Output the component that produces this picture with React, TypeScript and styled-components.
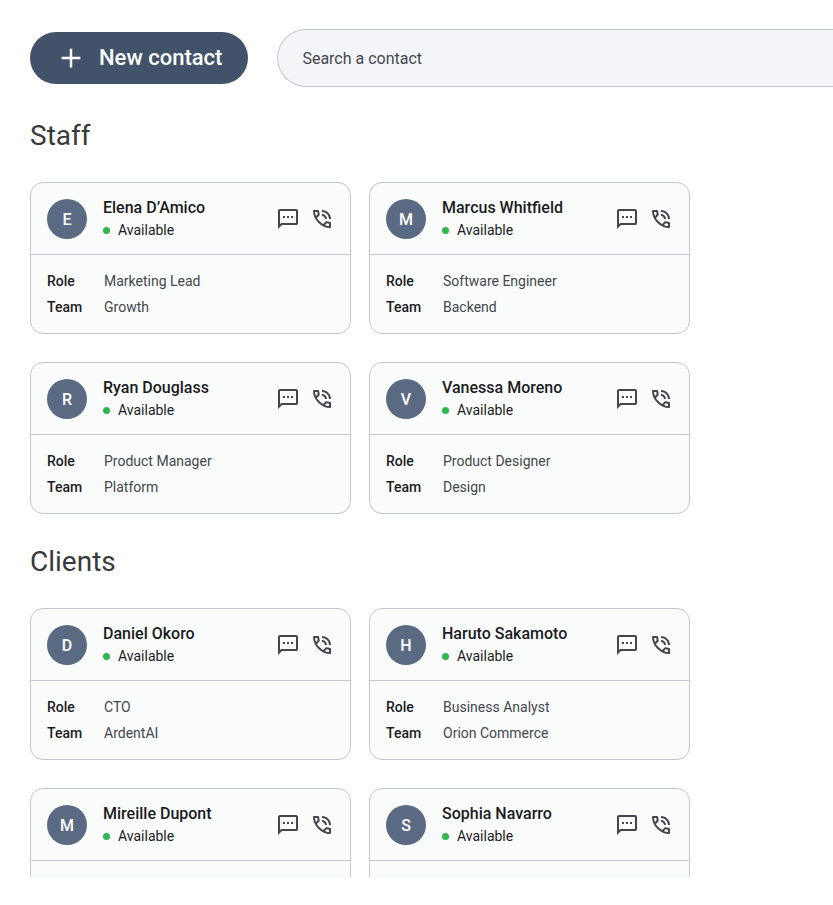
import React from 'react';
import styled, { createGlobalStyle } from 'styled-components';

const GlobalStyle = createGlobalStyle`
  *, *::before, *::after { box-sizing: border-box; }
  body {
    margin: 0;
    background: #ffffff;
    color: #1a1b1f;
    font-family: Roboto, 'Noto Sans', sans-serif;
  }
`;

const Page = styled.div`
  display: flex;
  flex-direction: column;
  gap: 1px;
  height: 100vh;
  padding: 29px 0 28px 30px;
`;

const Toolbar = styled.header`
  display: flex;
  flex: none;
  align-items: center;
  gap: 29px;
`;

const NewContactButton = styled.button`
  display: flex;
  flex: none;
  align-items: center;
  gap: 13px;
  height: 52px;
  padding: 0 26px;
  border: 0;
  border-radius: 26px;
  background: #43526b;
  color: #ffffff;
  font: 500 22px/28px Roboto, sans-serif;
  cursor: pointer;
`;

const SearchInput = styled.input`
  flex: 1;
  min-width: 0;
  height: 58px;
  padding: 0 24px;
  border: 1px solid #c3c6d1;
  border-right: 0;
  border-radius: 29px 0 0 29px;
  background: #f4f5f8;
  color: #1a1b1f;
  font: 400 16px/24px Roboto, sans-serif;

  &::placeholder {
    color: #44464e;
    opacity: 1;
  }
`;

const Contacts = styled.main`
  flex: 1;
  min-height: 0;
  overflow: hidden;
`;

const SectionTitle = styled.h2`
  margin: 0;
  padding: 30px 0 28px;
  color: #3a3a3c;
  font-size: 28px;
  font-weight: 400;
  line-height: 36px;
`;

const CardGrid = styled.div`
  display: grid;
  grid-template-columns: repeat(auto-fill, 321px);
  gap: 28px 18px;
`;

const Card = styled.article`
  overflow: hidden;
  border: 1px solid #c3c6d1;
  border-radius: 13px;
  background: #fafcfb;
`;

const CardHead = styled.div`
  display: flex;
  align-items: center;
  gap: 16px;
  padding: 14px 16px 13px;
  border-bottom: 1px solid #c3c6d1;
`;

const Avatar = styled.div`
  display: grid;
  flex: none;
  place-items: center;
  width: 40px;
  height: 40px;
  border-radius: 50%;
  background: #5b6a83;
  color: #ffffff;
  font-size: 16px;
  font-weight: 500;
`;

const Identity = styled.div`
  flex: 1;
  min-width: 0;
`;

const Name = styled.h3`
  margin: 0;
  font-size: 16px;
  font-weight: 500;
  line-height: 22px;
`;

const Status = styled.div`
  display: flex;
  align-items: center;
  gap: 8px;
  font-size: 14px;
  line-height: 22px;

  &::before {
    content: '';
    width: 7px;
    height: 7px;
    border-radius: 50%;
    background: #2fb64f;
  }
`;

const Actions = styled.div`
  display: flex;
  gap: 10px;
`;

const IconButton = styled.button`
  display: flex;
  padding: 0;
  border: 0;
  background: none;
  color: #44464e;
  cursor: pointer;
`;

const Details = styled.dl`
  display: grid;
  grid-template-columns: 57px 1fr;
  margin: 0;
  padding: 13px 16px;
  font-size: 14px;
  line-height: 26px;
`;

const Term = styled.dt`
  font-weight: 500;
`;

const Value = styled.dd`
  margin: 0;
  color: #44464e;
`;

const PlusIcon = () => (
  <svg width="30" height="30" viewBox="0 0 24 24" fill="currentColor" aria-hidden="true">
    <path d="M11 13H4.5v-2H11V4.5h2V11h6.5v2H13v6.5h-2z" />
  </svg>
);

const MessageIcon = () => (
  <svg width="24" height="24" viewBox="0 0 24 24" fill="currentColor" aria-hidden="true">
    <path d="M2 22V4q0-.825.588-1.412T4 2h16q.825 0 1.413.588T22 4v12q0 .825-.587 1.413T20 18H6zm3.150-6H20V4H4v13.125zM7 9h2v2H7zm4 0h2v2h-2zm4 0h2v2h-2z" />
  </svg>
);

const CallIcon = () => (
  <svg width="24" height="24" viewBox="0 0 24 24" fill="currentColor" aria-hidden="true">
    <path d="M19 12q0-2.925-2.038-4.962T12 5V3q1.875 0 3.513.713t2.85 1.925 1.925 2.85T21 12zm-4 0q0-1.250-.875-2.125T12 9V7q2.075 0 3.538 1.463T17 12zm4.950 9q-3.125 0-6.175-1.363t-5.550-3.862-3.862-5.550T3 4.050q0-.45.3-.75t.75-.3H8.100q.35 0 .625.238t.325.562l.65 3.500q.05.4-.025.675T9.400 8.450L6.975 10.900q.5.925 1.188 1.787t1.512 1.663q.775.775 1.625 1.438T13.100 17l2.350-2.350q.225-.225.588-.337t.712-.063l3.450.7q.35.1.575.363T21 15.900v4.050q0 .45-.3.75t-.75.3M6.025 9l1.650-1.650L7.250 5H5.025q.125 1.025.35 2.025T6.025 9m8.950 8.950q.975.425 1.988.675T19 18.950v-2.200l-2.350-.475z" />
  </svg>
);

interface Contact {
  name: string;
  role?: string;
  team?: string;
}

const sections: { title: string; contacts: Contact[] }[] = [
  {
    title: 'Staff',
    contacts: [
      { name: 'Elena D’Amico', role: 'Marketing Lead', team: 'Growth' },
      { name: 'Marcus Whitfield', role: 'Software Engineer', team: 'Backend' },
      { name: 'Ryan Douglass', role: 'Product Manager', team: 'Platform' },
      { name: 'Vanessa Moreno', role: 'Product Designer', team: 'Design' },
    ],
  },
  {
    title: 'Clients',
    contacts: [
      { name: 'Daniel Okoro', role: 'CTO', team: 'ArdentAI' },
      { name: 'Haruto Sakamoto', role: 'Business Analyst', team: 'Orion Commerce' },
      { name: 'Mireille Dupont' },
      { name: 'Sophia Navarro' },
    ],
  },
];

const DetailRow = ({ label, value }: { label: string; value?: string }) =>
  value ? (
    <>
      <Term>{label}</Term>
      <Value>{value}</Value>
    </>
  ) : null;

const ContactCard = ({ name, role, team }: Contact) => (
  <Card>
    <CardHead>
      <Avatar aria-hidden="true">{name[0]}</Avatar>
      <Identity>
        <Name>{name}</Name>
        <Status>Available</Status>
      </Identity>
      <Actions>
        <IconButton type="button" aria-label={`Message ${name}`}>
          <MessageIcon />
        </IconButton>
        <IconButton type="button" aria-label={`Call ${name}`}>
          <CallIcon />
        </IconButton>
      </Actions>
    </CardHead>
    <Details>
      <DetailRow label="Role" value={role} />
      <DetailRow label="Team" value={team} />
    </Details>
  </Card>
);

export default function App() {
  return (
    <>
      <GlobalStyle />
      <Page>
        <Toolbar>
          <NewContactButton type="button">
            <PlusIcon />
            New contact
          </NewContactButton>
          <SearchInput type="search" aria-label="Search a contact" placeholder="Search a contact" />
        </Toolbar>
        <Contacts>
          {sections.map((section) => (
            <section key={section.title}>
              <SectionTitle>{section.title}</SectionTitle>
              <CardGrid>
                {section.contacts.map((contact) => (
                  <ContactCard key={contact.name} {...contact} />
                ))}
              </CardGrid>
            </section>
          ))}
        </Contacts>
      </Page>
    </>
  );
}
